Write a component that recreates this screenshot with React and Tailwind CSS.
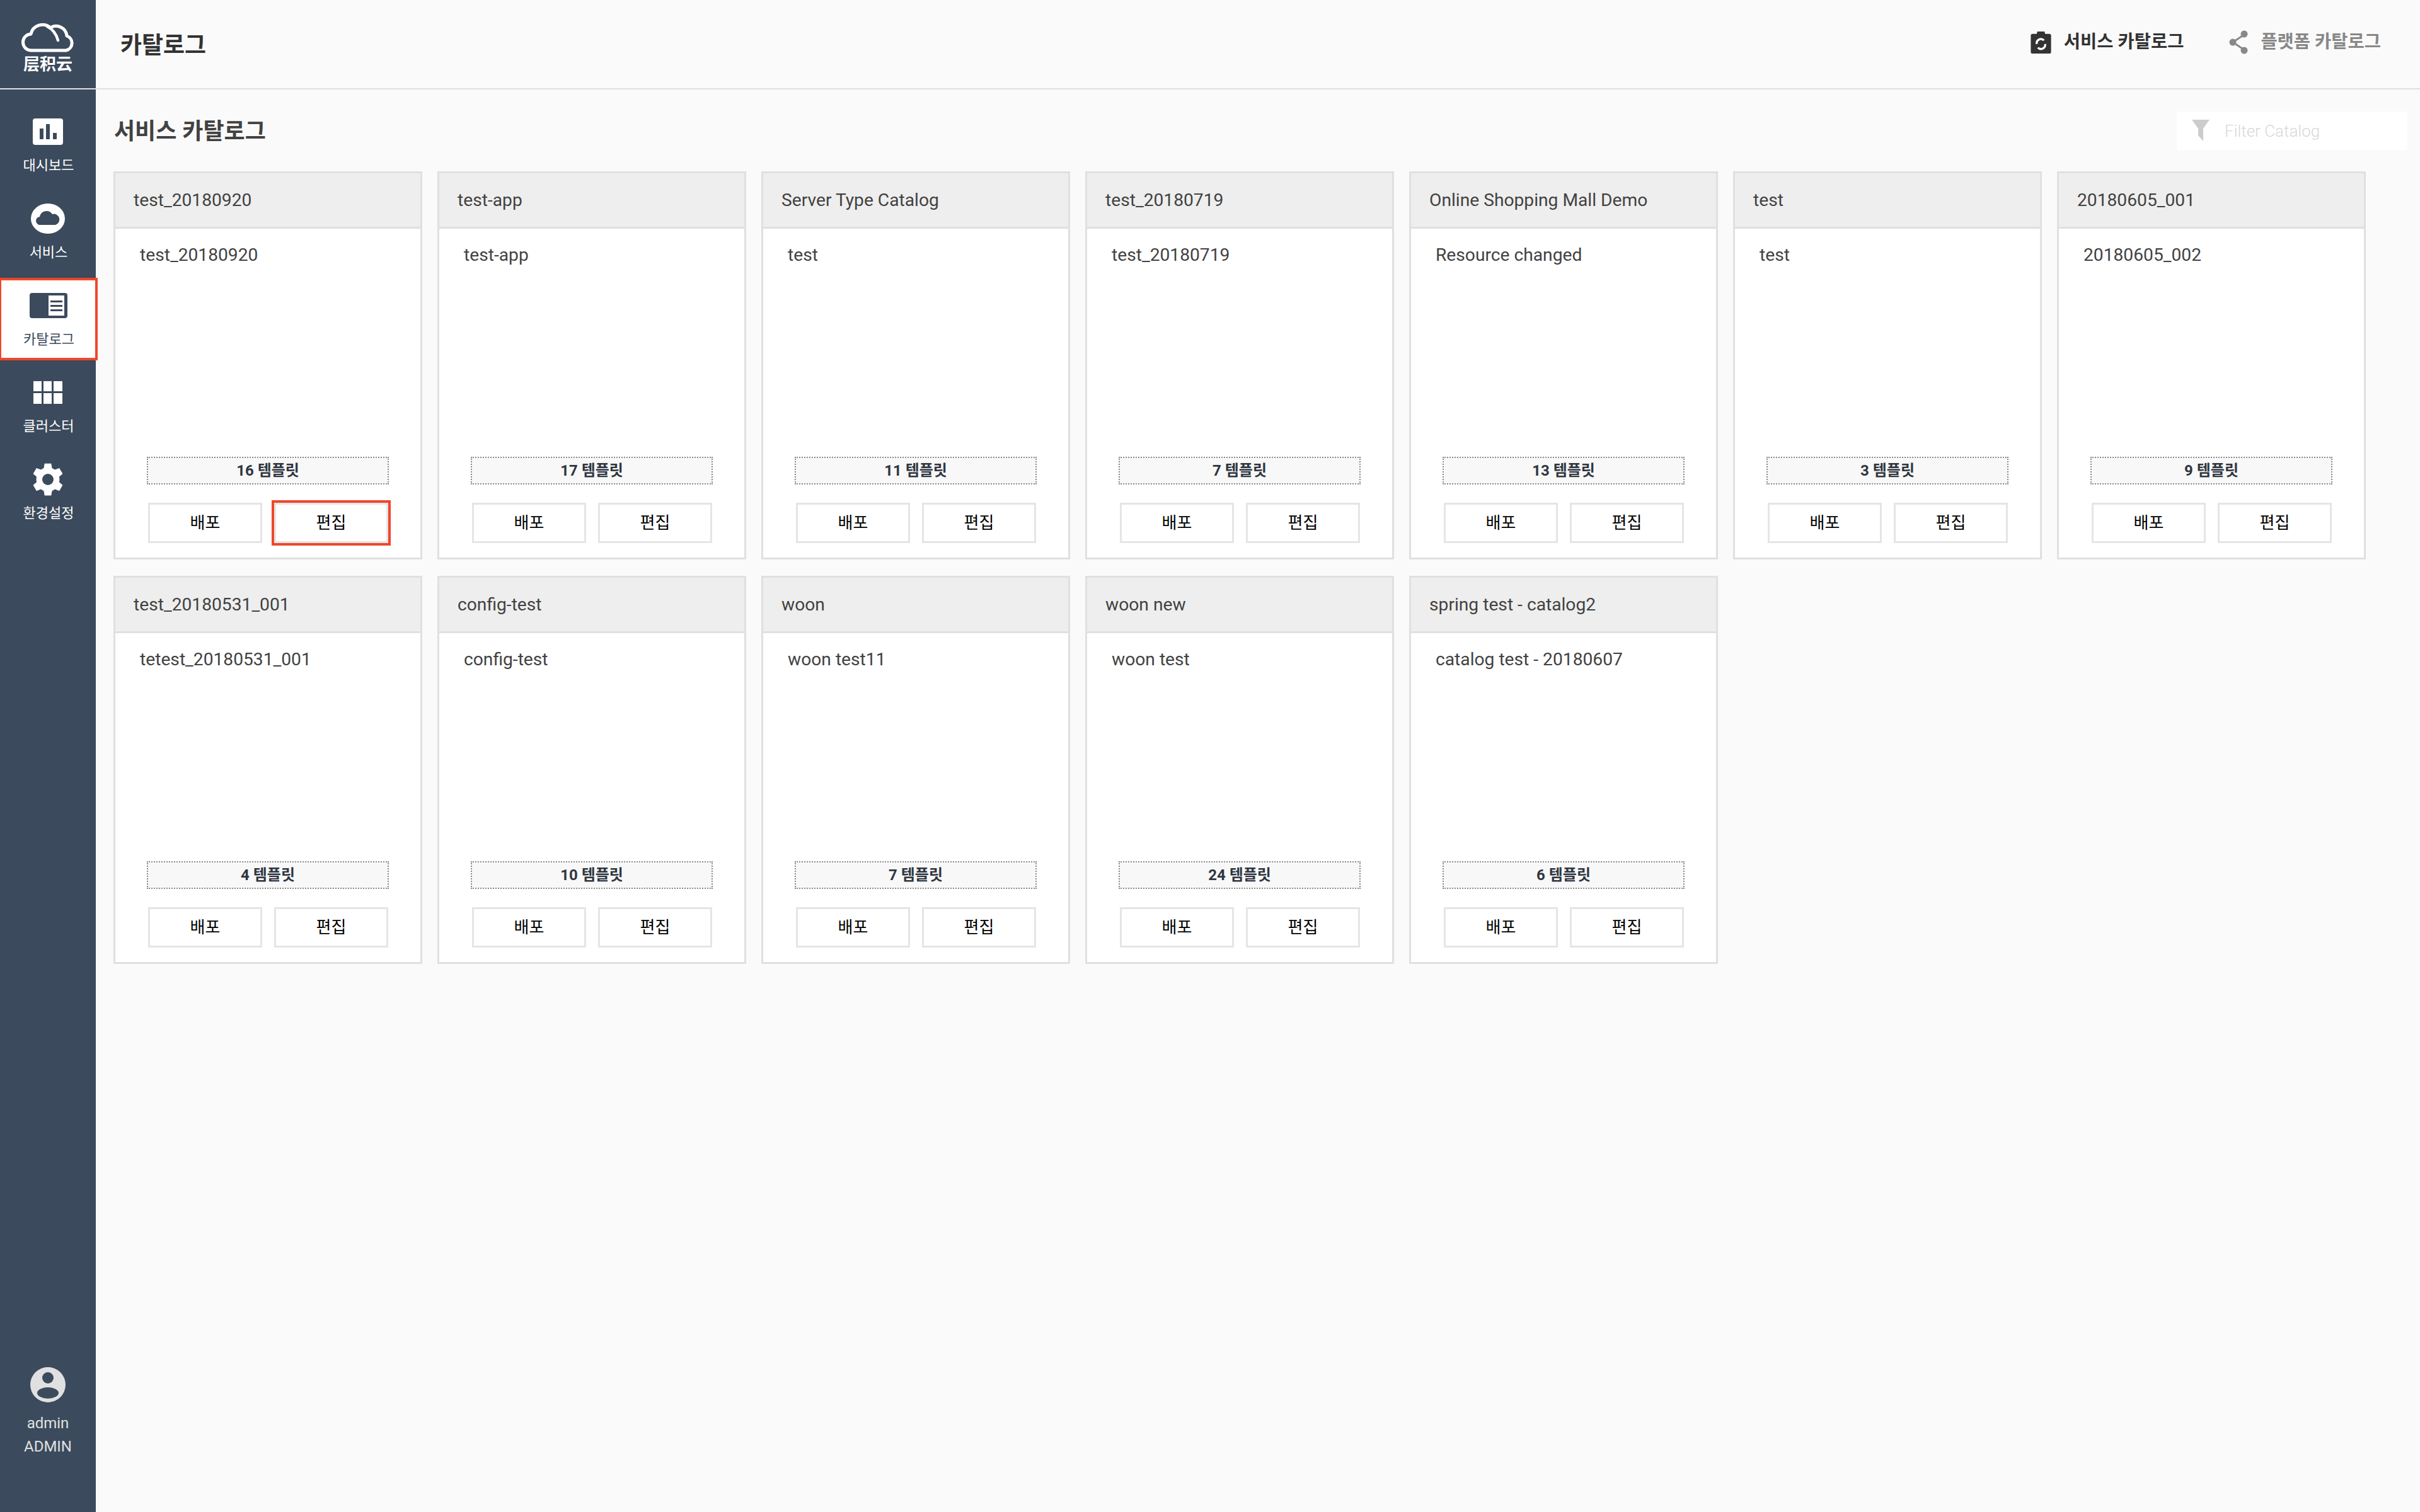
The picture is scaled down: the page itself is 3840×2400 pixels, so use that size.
import React from "react";

const catalogs = [
  { name: "test_20180920", desc: "test_20180920", count: "16 템플릿" },
  { name: "test-app", desc: "test-app", count: "17 템플릿" },
  { name: "Server Type Catalog", desc: "test", count: "11 템플릿" },
  { name: "test_20180719", desc: "test_20180719", count: "7 템플릿" },
  { name: "Online Shopping Mall Demo", desc: "Resource changed", count: "13 템플릿" },
  { name: "test", desc: "test", count: "3 템플릿" },
  { name: "20180605_001", desc: "20180605_002", count: "9 템플릿" },
  { name: "test_20180531_001", desc: "tetest_20180531_001", count: "4 템플릿" },
  { name: "config-test", desc: "config-test", count: "10 템플릿" },
  { name: "woon", desc: "woon test11", count: "7 템플릿" },
  { name: "woon new", desc: "woon test", count: "24 템플릿" },
  { name: "spring test - catalog2", desc: "catalog test - 20180607", count: "6 템플릿" },
];

const BarIcon = () => (
  <svg viewBox="0 0 48 42" className="w-[48px] h-[42px]">
    <rect width="48" height="42" rx="4" fill="#fff" />
    <rect x="11" y="16" width="6" height="17" fill="#3b4a5c" />
    <rect x="21" y="9" width="6" height="24" fill="#3b4a5c" />
    <rect x="32" y="23" width="6" height="10" fill="#3b4a5c" />
  </svg>
);

const CloudIcon = () => (
  <svg viewBox="0 0 54 48" className="w-[54px] h-[48px]">
    <ellipse cx="27" cy="24" rx="27" ry="24" fill="#fff" />
    <path d="M15 34a6.500 6.500 0 0 1-1-13 11 11 0 0 1 20-4 8.500 8.500 0 0 1 5 17z" fill="#3b4a5c" />
  </svg>
);

const CatalogIcon = () => (
  <svg viewBox="0 0 60 40" className="w-[60px] h-[40px]">
    <rect width="60" height="40" rx="4" fill="#3b4a5c" />
    <rect x="30" y="4" width="25" height="32" fill="#fff" />
    <rect x="33" y="12" width="19" height="3" fill="#3b4a5c" />
    <rect x="33" y="19" width="19" height="3" fill="#3b4a5c" />
    <rect x="33" y="26" width="19" height="3" fill="#3b4a5c" />
  </svg>
);

const GridIcon = () => (
  <svg viewBox="0 0 46 36" className="w-[46px] h-[36px]" fill="#fff">
    <rect width="13" height="16" />
    <rect x="16" width="13" height="16" />
    <rect x="32" width="14" height="16" />
    <rect y="19" width="13" height="17" />
    <rect x="16" y="19" width="13" height="17" />
    <rect x="32" y="19" width="14" height="17" />
  </svg>
);

const GearIcon = () => (
  <svg viewBox="0 0 24 24" className="w-[58px] h-[58px]">
    <path
      fill="#fff"
      d="M14.2 1.500h-4.400l-.5 3a8 8 0 0 0-1.900 1.100L4.500 4.500 2.300 8.300l2.300 1.900a8 8 0 0 0 0 3.600l-2.300 1.900 2.200 3.800 2.900-1.100a8 8 0 0 0 1.900 1.100l.5 3h4.400l.5-3a8 8 0 0 0 1.900-1.100l2.900 1.100 2.200-3.800-2.300-1.900a8 8 0 0 0 0-3.600l2.300-1.900-2.200-3.800-2.900 1.100a8 8 0 0 0-1.900-1.100z"
    />
    <circle cx="12" cy="12" r="3.700" fill="#3b4a5c" />
  </svg>
);

const LogoCloud = () => (
  <svg viewBox="0 0 84 50" className="w-[84px] h-[50px]" fill="none" stroke="#fff" strokeWidth="5" strokeLinecap="round" strokeLinejoin="round">
    <path d="M16 47a13 13 0 0 1-1-26 19 19 0 0 1 31-10 17 17 0 0 1 26 13 12 12 0 0 1-1 23z" />
    <path d="M41 9c8 4 14 11 17 22" strokeWidth="4.500" />
  </svg>
);

const UserIcon = () => (
  <svg viewBox="0 0 56 56" className="w-[56px] h-[56px]">
    <circle cx="28" cy="28" r="28" fill="#e0e0e0" />
    <circle cx="28" cy="17" r="9" fill="#3b4a5c" />
    <ellipse cx="28" cy="41" rx="17" ry="9" fill="#3b4a5c" />
  </svg>
);

const CameraIcon = () => (
  <svg viewBox="0 0 34 38" className="w-[33px] h-[36px]">
    <path d="M3 5h7l1-4h12l1 4h7a3 3 0 0 1 3 3v27a3 3 0 0 1-3 3H3a3 3 0 0 1-3-3V8a3 3 0 0 1 3-3z" fill="#333" />
    <path d="M10 22a7 7 0 0 1 12-6" fill="none" stroke="#fff" strokeWidth="3.500" />
    <path d="M24 22a7 7 0 0 1-12 6" fill="none" stroke="#fff" strokeWidth="3.500" />
  </svg>
);

const ShareIcon = () => (
  <svg viewBox="0 0 30 38" className="w-[30px] h-[38px]">
    <path d="M24 7 6 19l18 12" fill="none" stroke="#888" strokeWidth="3" />
    <circle cx="24" cy="6" r="5.500" fill="#888" />
    <circle cx="6" cy="19" r="5.500" fill="#888" />
    <circle cx="24" cy="32" r="5.500" fill="#888" />
  </svg>
);

const FunnelIcon = () => (
  <svg viewBox="0 0 28 34" className="w-[28px] h-[34px]">
    <path d="M0 0h28L18 14v20l-8-9V14z" fill="#ccc" />
  </svg>
);

const navItems = [
  { label: "대시보드", icon: <BarIcon /> },
  { label: "서비스", icon: <CloudIcon /> },
  { label: "카탈로그", icon: <CatalogIcon />, active: true },
  { label: "클러스터", icon: <GridIcon /> },
  { label: "환경설정", icon: <GearIcon /> },
];

const CatalogCard = ({ item, highlight }) => (
  <div className="w-[490px] h-[616px] flex flex-col bg-white border-[3px] border-[#e0e0e0]">
    <div className="h-[88px] shrink-0 flex items-center pl-[29px] pt-[2px] bg-[#eeeeee] border-b-[3px] border-[#e0e0e0] text-[28.2px] text-[#424242]">
      {item.name}
    </div>
    <div className="pl-[39px] pt-[24px] text-[28.2px] leading-[36px] text-[#424242]">{item.desc}</div>
    <div className="mt-auto pl-[50px] pr-[50px] pb-[23px]">
      <div className="h-[44px] flex items-center justify-center bg-[#f8f8f8] border-2 border-dotted border-[#8a8a8a] text-[24px] font-bold text-[#2f3640]">
        {item.count}
      </div>
      <div className="mt-[29px] flex justify-between pl-[2px] pr-[1px]">
        <button className="w-[181px] h-[64px] bg-white border-[3px] border-[#e5e5e5] text-[26px] text-black">배포</button>
        <button
          className={`w-[181px] h-[64px] bg-white border-[3px] border-[#e5e5e5] text-[26px] text-black ${
            highlight ? "outline-[4px] outline-[#f0472a]" : ""
          }`}
        >
          편집
        </button>
      </div>
    </div>
  </div>
);

export default function App() {
  const font = { fontFamily: '"Roboto", "Noto Sans CJK KR", sans-serif' };

  return (
    <div className="flex h-[2400px] bg-[#fafafa]" style={font}>
      {/* Sidebar */}
      <aside className="w-[152px] shrink-0 flex flex-col bg-[#3b4a5c]">
        <div className="h-[142px] shrink-0 flex flex-col items-center justify-center pt-[8px] border-b-2 border-[#e0e0e0]">
          <LogoCloud />
          <div
            className="mt-[2px] text-[26px] leading-[30px] font-bold text-white"
            style={{ fontFamily: '"Noto Sans CJK SC", sans-serif' }}
          >
            层积云
          </div>
        </div>
        <nav className="mt-[25px] flex flex-col gap-[11px]">
          {navItems.map((n) => (
            <div
              key={n.label}
              className={`h-[127px] flex flex-col items-center ${
                n.active ? "bg-white text-[#3b4a5c] outline-[4px] outline-offset-[-2px] outline-[#f0472a] relative w-[153px]" : "text-white"
              }`}
            >
              <div className="h-[84px] flex items-center justify-center">{n.icon}</div>
              <div className="pl-[2px] pt-[1px] text-[22px] leading-[22px]">{n.label}</div>
            </div>
          ))}
        </nav>
        <div className="mt-auto pb-[85px] flex flex-col items-center text-[#e0e0e0]">
          <UserIcon />
          <div className="mt-[15px] text-[24px] leading-[36px]">admin</div>
          <div className="text-[24px] leading-[38px]">ADMIN</div>
        </div>
      </aside>

      {/* Main */}
      <main className="flex-1 flex flex-col">
        <header className="h-[142px] shrink-0 flex items-center justify-between pl-[39px] pr-[62px] border-b-2 border-[#e0e0e0]">
          <h1 className="pt-[5px] text-[37px] font-bold text-[#333]">카탈로그</h1>
          <div className="flex items-center gap-[72px] pb-[6px]">
            <div className="flex items-center gap-[20px] text-[28.5px] font-bold text-[#333]">
              <CameraIcon />
              서비스 카탈로그
            </div>
            <div className="flex items-center gap-[20px] text-[28.5px] font-bold text-[#888]">
              <ShareIcon />
              플랫폼 카탈로그
            </div>
          </div>
        </header>

        <section className="pl-[28px] pr-[20px]">
          <div className="h-[130px] flex items-center justify-between">
            <h2 className="pl-[1px] pt-[3px] text-[36px] font-bold text-[#424242]">서비스 카탈로그</h2>
            <div className="w-[366px] h-[61px] flex items-center gap-[24px] pl-[24px] bg-white">
              <FunnelIcon />
              <span className="pt-[2px] text-[26px] font-light text-[#d8d8d8]">Filter Catalog</span>
            </div>
          </div>
          <div className="flex flex-wrap gap-x-[24px] gap-y-[26px]">
            {catalogs.map((c, i) => (
              <CatalogCard key={c.name} item={c} highlight={i === 0} />
            ))}
          </div>
        </section>
      </main>
    </div>
  );
}
